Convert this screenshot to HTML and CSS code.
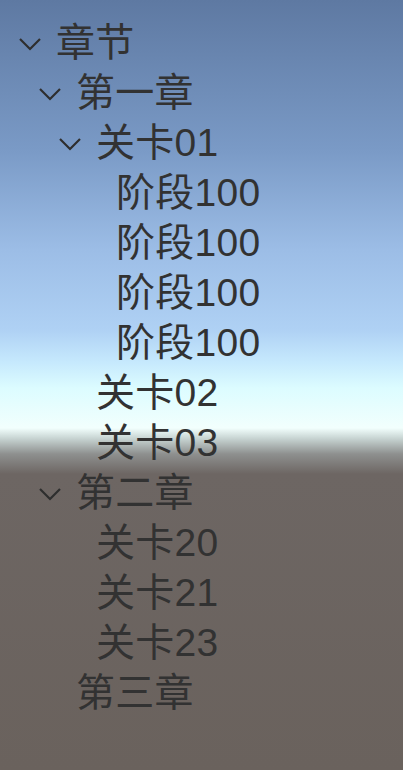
FILE: index.html
```html
<!DOCTYPE html>
<html lang="zh">
<head>
<meta charset="utf-8">
<link rel="stylesheet" href="styles.css">
</head>
<body>
<div class="scene">
  <ul class="tree">
    <li class="row l0"><span class="toggle"><svg viewBox="0 0 24 14" width="24" height="14"><path d="M2 2 L12 12 L22 2"/></svg></span><span class="label">章节</span></li>
    <li class="row l1"><span class="toggle"><svg viewBox="0 0 24 14" width="24" height="14"><path d="M2 2 L12 12 L22 2"/></svg></span><span class="label">第一章</span></li>
    <li class="row l2"><span class="toggle"><svg viewBox="0 0 24 14" width="24" height="14"><path d="M2 2 L12 12 L22 2"/></svg></span><span class="label">关卡01</span></li>
    <li class="row l3"><span class="toggle"></span><span class="label">阶段100</span></li>
    <li class="row l3"><span class="toggle"></span><span class="label">阶段100</span></li>
    <li class="row l3"><span class="toggle"></span><span class="label">阶段100</span></li>
    <li class="row l3"><span class="toggle"></span><span class="label">阶段100</span></li>
    <li class="row l2"><span class="toggle"></span><span class="label">关卡02</span></li>
    <li class="row l2"><span class="toggle"></span><span class="label">关卡03</span></li>
    <li class="row l1"><span class="toggle"><svg viewBox="0 0 24 14" width="24" height="14"><path d="M2 2 L12 12 L22 2"/></svg></span><span class="label">第二章</span></li>
    <li class="row l2"><span class="toggle"></span><span class="label">关卡20</span></li>
    <li class="row l2"><span class="toggle"></span><span class="label">关卡21</span></li>
    <li class="row l2"><span class="toggle"></span><span class="label">关卡23</span></li>
    <li class="row l1"><span class="toggle"></span><span class="label">第三章</span></li>
  </ul>
</div>
</body>
</html>
```

FILE: styles.css
```css
html, body {
  margin: 0;
  padding: 0;
  height: 100%;
}
body {
  font-family: "Liberation Sans", "Noto Sans CJK SC", sans-serif;
}
.scene {
  width: 403px;
  height: 770px;
  overflow: hidden;
  background: linear-gradient(to bottom,
    #5e79a2 0px,
    #7a9ac6 150px,
    #9cbde6 250px,
    #afd1f4 330px,
    #c6e9fd 362px,
    #dcfcff 388px,
    #f2fffd 428px,
    #c9d6d4 438px,
    #8e908f 454px,
    #6d6663 474px,
    #6a625d 770px);
}
.tree {
  list-style: none;
  margin: 0;
  padding: 18px 0 0 0;
}
.row {
  display: flex;
  align-items: center;
  height: 50px;
  color: #323232;
  font-size: 39px;
}
.l0 { padding-left: 16px; }
.l1 { padding-left: 36px; }
.l2 { padding-left: 56px; }
.l3 { padding-left: 76px; }
.toggle {
  display: flex;
  align-items: center;
  width: 40px;
  height: 50px;
  flex: none;
}
.toggle svg {
  margin-left: 2px;
  margin-top: 2px;
}
.toggle path {
  fill: none;
  stroke: #2e2e2e;
  stroke-width: 2.2;
}
.label {
  white-space: nowrap;
  line-height: 50px;
  letter-spacing: 0.3px;
}
```
